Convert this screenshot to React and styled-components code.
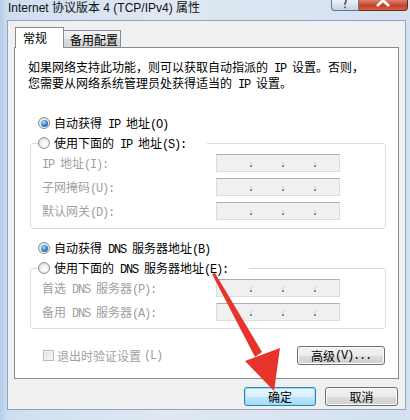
import React from 'react';
import styled, { createGlobalStyle, css } from 'styled-components';

const GlobalStyle = createGlobalStyle`
  html, body { margin: 0; padding: 0; background: #fff; }
  body { font-family: "Noto Sans CJK SC", sans-serif; font-size: 12px; color: #000; }
  * { box-sizing: border-box; }
`;

const Window = styled.div`
  position: relative;
  width: 410px;
  height: 420px;
  display: flex;
  flex-direction: column;
  overflow: hidden;
  background: linear-gradient(90deg, #b4cce8 0, #cfdff0 2%, #dfe8f2 40%, #d3e1f0 100%);
`;

const TitleBar = styled.div`
  height: 20px;
  display: flex;
  align-items: flex-start;
  padding-left: 8px;
  padding-right: 2px;
  flex: none;
`;

const Title = styled.div`
  font-family: "Liberation Sans", "Noto Sans CJK SC", sans-serif;
  font-size: 12px;
  line-height: 17px;
  color: #111;
  white-space: nowrap;
`;

const HelpButton = styled.div`
  margin-left: auto;
  width: 28px;
  height: 11px;
  border: 1px solid #65758a;
  border-top: none;
  border-radius: 0 0 0 4px;
  background: linear-gradient(#eef3f8, #d4dfeb 60%, #c4d2e2);
  display: flex;
  justify-content: center;
`;

const CloseButton = styled.div`
  width: 49px;
  height: 11px;
  border: 1px solid #6b2a20;
  border-top: none;
  border-left: none;
  border-radius: 0 0 4px 0;
  background: linear-gradient(#d9836f, #c4412b 55%, #d6613f);
  display: flex;
  justify-content: center;
`;

const Client = styled.div`
  flex: 1;
  margin: 0 4px 10px 7px;
  border: 1px solid #8ea6c2;
  background: #f0f0f0;
  padding: 6px 6px 3px 6px;
  display: flex;
  flex-direction: column;
`;

const TabStrip = styled.div`
  display: flex;
  align-items: flex-end;
  height: 21px;
  margin-bottom: -1px;
  padding-left: 1px;
  position: relative;
  z-index: 1;
`;

const Tab = styled.div`
  border: 1px solid #898c95;
  border-bottom: none;
  font-size: 12px;
  white-space: nowrap;
  ${p => p.$active ? css`
    width: 49px;
    height: 21px;
    background: #fff;
    padding-left: 7px;
    line-height: 19px;
  ` : css`
    width: 57px;
    height: 17px;
    margin-bottom: 1px;
    border-left: none;
    background: linear-gradient(#f4f4f4, #e9e9e9 50%, #dadada 51%, #d4d4d4);
    padding-left: 6px;
    line-height: 17px;
  `}
`;

const Panel = styled.div`
  border: 1px solid #898c95;
  background: #fff;
  height: 332px;
  padding: 12px 12px 13px 15px;
  display: flex;
  flex-direction: column;
`;

const Description = styled.div`
  margin-left: -2px;
  line-height: 14px;
  height: 28px;
  white-space: nowrap;
`;

const A = styled.span`
  font-family: "Liberation Mono", monospace;
  font-size: 12px;
  letter-spacing: -1.2px;
`;

const RadioRow = styled.div`
  display: flex;
  align-items: center;
  gap: 4px;
  height: 20px;
  margin-left: 8px;
  margin-top: ${p => p.$top}px;
  white-space: nowrap;
`;

const Radio = styled.span`
  flex: none;
  position: relative;
  width: 12px;
  height: 12px;
  border-radius: 50%;
  border: 1px solid #8b8d90;
  background: radial-gradient(circle at 60% 65%, #ffffff 0, #f1f1f1 45%, #cfd0d2 100%);
  ${p => p.$checked && css`
    &::after {
      content: '';
      position: absolute;
      left: 1.5px;
      top: 1.5px;
      width: 7px;
      height: 7px;
      border-radius: 50%;
      background: radial-gradient(circle at 40% 35%, #b6e0fb 0, #3d8ad8 45%, #12407e 100%);
    }
  `}
`;

const Group = styled.fieldset`
  margin: 0;
  min-width: 0;
  padding: 0 0 ${p => p.$bottom}px 0;
  border: 1px solid #d5dbe2;
  border-radius: 3px;
`;

const Legend = styled.legend`
  padding: 0 21px 0 0;
  margin-left: 7px;
  height: 20px;
  display: flex;
  align-items: center;
  gap: 4px;
  white-space: nowrap;
`;

const Rows = styled.div`
  margin: 1px 0 0 11px;
  display: flex;
  flex-direction: column;
  gap: 6px;
`;

const Field = styled.div`
  display: flex;
  align-items: center;
  height: 18px;
`;

const Label = styled.div`
  width: 174px;
  color: #a0a0a0;
  white-space: nowrap;
`;

const IpBox = styled.div`
  width: 124px;
  height: 18px;
  background: #f0f0f0;
  border: 1px solid #dcdcdc;
  border-top-color: #adadad;
  display: flex;
  gap: 30px;
  padding: 10px 0 0 33px;
`;

const Dot = styled.span`
  width: 2px;
  height: 2px;
  background: #8c8c8c;
  box-shadow: 0 -3px 0 #d8d8d8;
`;

const BottomRow = styled.div`
  margin-top: 17px;
  height: 19px;
  display: flex;
  align-items: center;
  justify-content: space-between;
  padding-left: 13px;
  padding-right: 1px;
`;

const Check = styled.label`
  display: flex;
  align-items: center;
  gap: 3px;
  color: #a0a0a0;
  white-space: nowrap;
`;

const CheckBox = styled.span`
  width: 11px;
  height: 11px;
  border: 1px solid #b9b9b9;
  background: linear-gradient(135deg, #e2e2e2, #f7f7f7);
  box-shadow: inset 0 0 0 1px #f2f2f2;
`;

const Button = styled.div`
  width: ${p => p.$w}px;
  height: 19px;
  border-radius: 3px;
  border: 1px solid ${p => p.$default ? '#3c7fb1' : '#707070'};
  background: ${p => p.$default
    ? 'linear-gradient(#eaf6fd, #d9f0fc 50%, #bee6fd 51%, #a7d9f5)'
    : 'linear-gradient(#f2f2f2, #ebebeb 50%, #dddddd 51%, #cfcfcf)'};
  box-shadow: inset 0 0 0 1px ${p => p.$default ? '#8ee0fb' : '#fbfbfb'};
  display: flex;
  align-items: center;
  justify-content: center;
  font-size: 12px;
  white-space: nowrap;
`;

const ButtonRow = styled.div`
  margin-top: 8px;
  display: flex;
  justify-content: flex-end;
  gap: 9px;
  padding-right: 1px;
`;

const Overlay = styled.svg`
  position: absolute;
  left: 0;
  top: 0;
  pointer-events: none;
`;

const ipFields = [
  { label: <><A>IP </A>地址<A>(I):</A></> },
  { label: <>子网掩码<A>(U):</A></> },
  { label: <>默认网关<A>(D):</A></> },
];

const dnsFields = [
  { label: <>首选<A> DNS </A>服务器<A>(P):</A></> },
  { label: <>备用<A> DNS </A>服务器<A>(A):</A></> },
];

function IpInput() {
  return (
    <IpBox>
      <Dot /><Dot /><Dot />
    </IpBox>
  );
}

export default function App() {
  return (
    <>
      <GlobalStyle />
      <Window>
        <TitleBar>
          <Title>Internet 协议版本 4 (TCP/IPv4) 属性</Title>
          <HelpButton>
            <svg width="10" height="10" viewBox="0 0 10 10">
              <path d="M2.5 -1 C6.5 -1 7 1.5 5 3 L5 5" stroke="#4e5b6b" strokeWidth="1.6" fill="none" />
              <rect x="4.2" y="6.5" width="1.7" height="1.7" fill="#4e5b6b" />
            </svg>
          </HelpButton>
          <CloseButton>
            <svg width="16" height="10" viewBox="0 0 16 10">
              <path d="M1 -6 L14 6 M15 -6 L2 6" stroke="#fff" strokeWidth="2.6" />
            </svg>
          </CloseButton>
        </TitleBar>
        <Client>
          <TabStrip>
            <Tab $active>常规</Tab>
            <Tab>备用配置</Tab>
          </TabStrip>
          <Panel>
            <Description>
              如果网络支持此功能，则可以获取自动指派的<A> IP </A>设置。否则，<br />
              您需要从网络系统管理员处获得适当的<A> IP </A>设置。
            </Description>
            <RadioRow $top={25}>
              <Radio $checked />
              <span>自动获得<A> IP </A>地址<A>(O)</A></span>
            </RadioRow>
            <Group $bottom={8}>
              <Legend>
                <Radio />
                <span>使用下面的<A> IP </A>地址<A>(S):</A></span>
              </Legend>
              <Rows>
                {ipFields.map((f, i) => (
                  <Field key={i}>
                    <Label>{f.label}</Label>
                    <IpInput />
                  </Field>
                ))}
              </Rows>
            </Group>
            <RadioRow $top={9}>
              <Radio $checked />
              <span>自动获得<A> DNS </A>服务器地址<A>(B)</A></span>
            </RadioRow>
            <Group $bottom={7}>
              <Legend>
                <Radio />
                <span>使用下面的<A> DNS </A>服务器地址<A>(E):</A></span>
              </Legend>
              <Rows>
                {dnsFields.map((f, i) => (
                  <Field key={i}>
                    <Label>{f.label}</Label>
                    <IpInput />
                  </Field>
                ))}
              </Rows>
            </Group>
            <BottomRow>
              <Check>
                <CheckBox />
                退出时验证设置<A>(L)</A>
              </Check>
              <Button $w={88}>高级<A>(V)...</A></Button>
            </BottomRow>
          </Panel>
          <ButtonRow>
            <Button $w={72} $default>确定</Button>
            <Button $w={73}>取消</Button>
          </ButtonRow>
        </Client>
        <Overlay width="410" height="420" viewBox="0 0 410 420">
          <polygon points="212,274 215,273 262,352 255,357" fill="#e8332b" />
          <polygon points="245,361 280,348 274,391" fill="#e8332b" />
        </Overlay>
      </Window>
    </>
  );
}
